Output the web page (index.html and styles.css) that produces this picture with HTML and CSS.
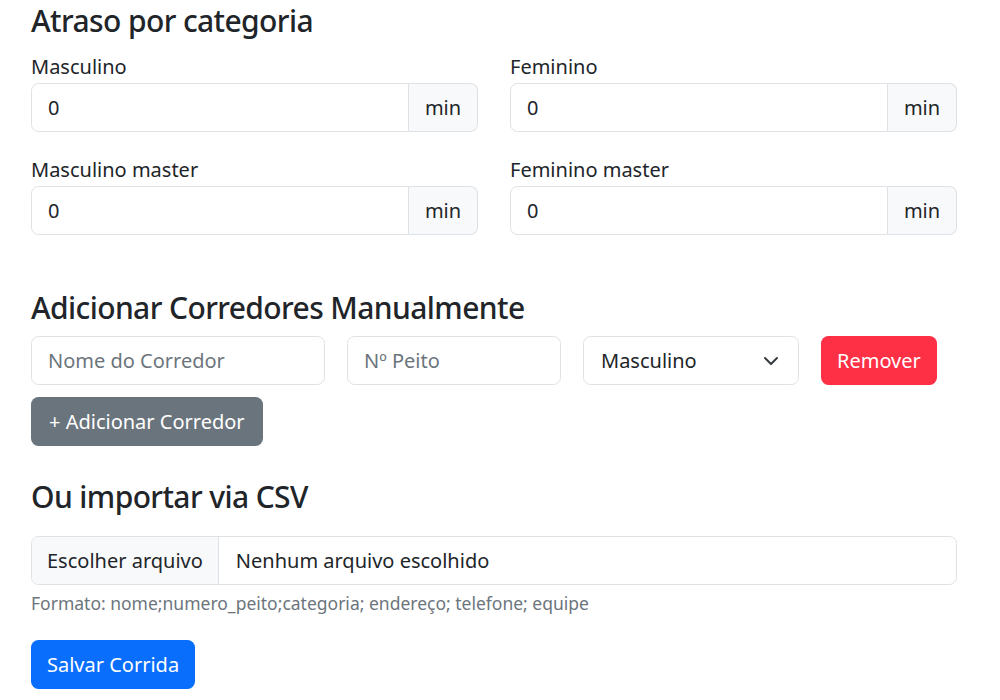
FILE: index.html
```html
<!DOCTYPE html>
<html lang="pt-BR">
	<head>
		<meta charset="utf-8" />
		<title>Nova Corrida</title>
		<link rel="stylesheet" href="styles.css">
	</head>
	<body>
		<form class="race-form">
			<h4 class="section-title">Atraso por categoria</h4>
			<div class="delay-grid">
				<div class="field">
					<label>Masculino</label>
					<div class="input-group">
						<input class="form-control" type="number" value="0">
						<span class="input-group-text">min</span>
					</div>
				</div>
				<div class="field">
					<label>Feminino</label>
					<div class="input-group">
						<input class="form-control" type="number" value="0">
						<span class="input-group-text">min</span>
					</div>
				</div>
				<div class="field">
					<label>Masculino master</label>
					<div class="input-group">
						<input class="form-control" type="number" value="0">
						<span class="input-group-text">min</span>
					</div>
				</div>
				<div class="field">
					<label>Feminino master</label>
					<div class="input-group">
						<input class="form-control" type="number" value="0">
						<span class="input-group-text">min</span>
					</div>
				</div>
			</div>

			<h4 class="section-title manual">Adicionar Corredores Manualmente</h4>
			<div class="runner-row">
				<input class="form-control" type="text" placeholder="Nome do Corredor">
				<input class="form-control" type="text" placeholder="Nº Peito">
				<div class="select-wrap">
					<select class="form-select">
						<option>Masculino</option>
						<option>Feminino</option>
						<option>Masculino master</option>
						<option>Feminino master</option>
					</select>
					<svg class="chevron" viewBox="0 0 16 16" width="16" height="16"><path d="M2 5l6 6 6-6" fill="none" stroke="#343a40" stroke-width="2" stroke-linecap="round" stroke-linejoin="round"/></svg>
				</div>
				<div><button type="button" class="btn btn-danger">Remover</button></div>
			</div>
			<button type="button" class="btn btn-secondary">+ Adicionar Corredor</button>

			<h4 class="section-title csv">Ou importar via CSV</h4>
			<div class="file-input">
				<span class="file-btn">Escolher arquivo</span>
				<span class="file-name">Nenhum arquivo escolhido</span>
			</div>
			<div class="form-text">Formato: nome;numero_peito;categoria; endereço; telefone; equipe</div>

			<button type="submit" class="btn btn-primary">Salvar Corrida</button>
		</form>
	</body>
</html>
```

FILE: styles.css
```css
body{margin: 0;background: #fff;color: #212529;font-family: "Noto Sans", "Open Sans", sans-serif;font-size: 20px;line-height: 30px;}

.race-form{width: 926px;padding: 3px 0 0 31px;}

.section-title{margin: 0 0 13px;font-size: 30px;line-height: 36px;font-weight: 500;letter-spacing: -0.6px;}
.section-title.manual{margin-top: 55px;margin-bottom: 10px;}
.section-title.csv{margin-top: 33px;margin-bottom: 21px;}

.delay-grid{display: grid;grid-template-columns: 1fr 1fr;column-gap: 32px;row-gap: 23px;}
.field label{display: block;margin-bottom: 1px;}

.form-control,.form-select{box-sizing: border-box;height: 49px;padding: 8px 16px;border: 1px solid #dee2e6;border-radius: 7.5px;font: inherit;color: #212529;background: #fff;outline: none;}
.form-control::placeholder{color: #6c757d;}
.form-control::-webkit-inner-spin-button,.form-control::-webkit-outer-spin-button{-webkit-appearance: none;margin: 0;}

.input-group{display: flex;}
.input-group .form-control{flex: 1;min-width: 0;border-radius: 7.5px 0 0 7.5px;}
.input-group-text{box-sizing: border-box;height: 49px;width: 69px;display: flex;align-items: center;justify-content: center;border: 1px solid #dee2e6;border-left: 0;border-radius: 0 7.5px 7.5px 0;background: #f8f9fa;}

.runner-row{display: grid;grid-template-columns: 294px 214px 216px auto;column-gap: 22px;margin-bottom: 12px;}
.runner-row .form-control{width: 100%;}
.select-wrap{position: relative;}
.form-select{width: 100%;-webkit-appearance: none;appearance: none;padding-left: 17px;}
.chevron{position: absolute;right: 20px;top: 17px;pointer-events: none;}

.btn{box-sizing: border-box;height: 49px;padding: 0 15px;border: 1px solid transparent;border-radius: 7.5px;font: inherit;color: #fff;cursor: pointer;}
.btn-danger{background: #fd3045;}
.btn-secondary{background: #6a747c;padding: 0 17px;}
.btn-primary{background: #0a6efd;margin-top: 24px;}

.file-input{box-sizing: border-box;display: flex;height: 49px;border: 1px solid #dee2e6;border-radius: 7.5px;overflow: hidden;}
.file-btn{display: flex;align-items: center;padding: 0 15px;background: #f8f9fa;border-right: 1px solid #dee2e6;}
.file-name{display: flex;align-items: center;padding: 0 17px;}

.form-text{margin-top: 5px;font-size: 17.5px;line-height: 26px;color: #6c757d;}
```
